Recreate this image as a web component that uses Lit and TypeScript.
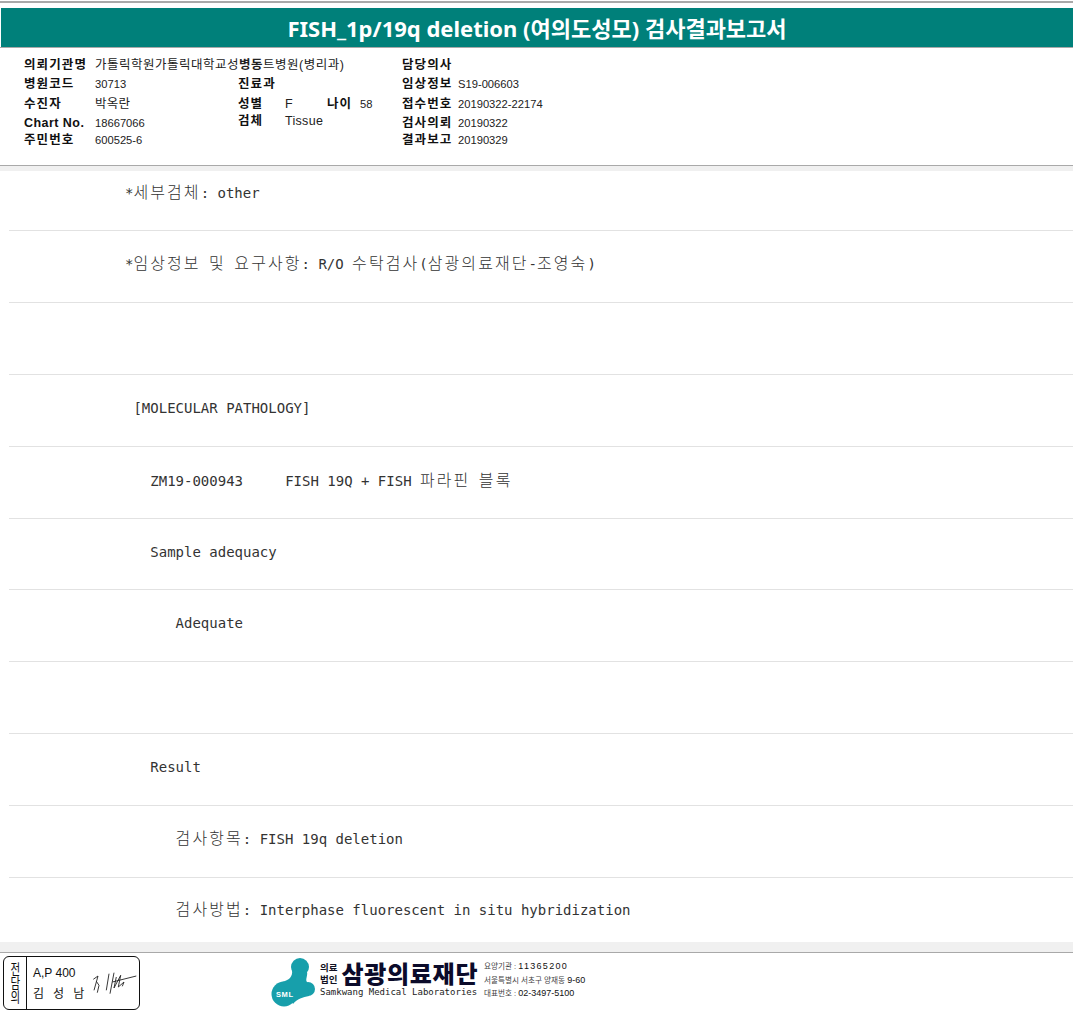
import { LitElement, html, css } from "lit";
import { customElement } from "lit/decorators.js";

const rows: { text: string; h: number; top: number }[] = [
  { text: "*세부검체: other", h: 60, top: 11 },
  { text: "*임상정보 및 요구사항: R/O 수탁검사(삼광의료재단-조영숙)", h: 72, top: 22 },
  { text: "", h: 72, top: 24 },
  { text: " [MOLECULAR PATHOLOGY]", h: 72, top: 24 },
  { text: "   ZM19-000943     FISH 19Q + FISH 파라핀 블록", h: 72, top: 23 },
  { text: "   Sample adequacy", h: 71, top: 24 },
  { text: "      Adequate", h: 72, top: 24 },
  { text: "", h: 72, top: 24 },
  { text: "   Result", h: 72, top: 24 },
  { text: "      검사항목: FISH 19q deletion", h: 72, top: 22 },
  { text: "      검사방법: Interphase fluorescent in situ hybridization", h: 64, top: 21 },
];

function mono(t: string) {
  return t.split(/([\uAC00-\uD7A3]+)/).map((p, i) =>
    i % 2 ? html`<span class="ko">${p}</span>` : p
  );
}

@customElement("app-root")
export class AppRoot extends LitElement {
  static styles = css`
    :host { display: block; width: 1073px; height: 1021px; background: #fff; overflow: hidden;
      font-family: "Liberation Sans", "Noto Sans CJK KR", sans-serif; color: #111; }
    .topline { height: 2px; margin-top: 1px; background: #a9a9a9; }
    .title { margin: 5px 0 0 1px; height: 39px; box-sizing: border-box; padding-top: 2px; background: #00807a; color: #fff; display: flex;
      align-items: center; justify-content: center; font: 700 22px/37px "Noto Sans", "Noto Sans CJK KR", sans-serif; }
    .titleline { height: 1px; background: #a9a9a9; }
    .info { height: 117px; box-sizing: border-box; padding: 8.5px 0 0 24px; display: grid;
      grid-template-columns: 71px 143px 47px 42px 33px 42px 56px auto;
      grid-template-rows: 18px 19px 21px 17px 17px; font-size: 12px; line-height: 17px; align-items: center; }
    .l { font-weight: 700; letter-spacing: 1.1px; white-space: nowrap; font-size: 12.5px; }
    .l.en { letter-spacing: 0.45px; }
    .v { white-space: nowrap; color: #222; font-size: 11.2px; }
    .v.t { font-size: 12.5px; letter-spacing: 0.3px; }
    .up { margin-bottom: 3px; }
    .wide { grid-column: 2 / span 3; font-size: 12.5px; letter-spacing: 0.5px; }
    .c3 { grid-column: 7; }
    .c8 { grid-column: 8; }
    .c1 { grid-column: 1; }
    .c2 { grid-column: 2; }
    .c3b { grid-column: 3; }
    .c4 { grid-column: 4; }
    .c5 { grid-column: 5; }
    .c6 { grid-column: 6; }
    .band { height: 5px; border-top: 1px solid #a9a9a9; background: #f0f0f0; }
    .row { margin-left: 9px; box-sizing: border-box; border-bottom: 1px solid #e2e2e2; padding-left: 116px;
      font: 14px/18px "DejaVu Sans Mono", monospace; white-space: pre; color: #333; }
    .row.last { border-bottom: 0; }
    .row > div { height: 18px; }
    .ko { font: 300 16px/18px "Noto Sans CJK KR", sans-serif; letter-spacing: 2.08px; }
    .foot { height: 10px; background: #f0f0f0; border-bottom: 1px solid #a9a9a9; }
    .bottom { display: flex; padding: 3px 0 0 3px; align-items: flex-start; }
    .stamp { width: 137px; height: 54px; box-sizing: border-box; border: 1px solid #111; border-radius: 6px; display: flex; flex: none; }
    .stamp .side { width: 22px; border-right: 1px solid #111; font-size: 14px; line-height: 14px; display: flex; flex-direction: column;
      align-items: center; justify-content: center; }
    .stamp .side span { transform: scaleX(0.75); }
    .stamp .who { font-size: 12px; padding: 6px 0 0 6px; line-height: 21px; width: 54px; white-space: pre; }
    .stamp .name { letter-spacing: 0.8px; }
    .stamp svg { margin-top: 9px; flex: none; }
    .logo { margin: 1px 0 0 131px; width: 46px; height: 50px; flex: none; }
    .brand { margin: 4px 0 0 3px; width: 160px; flex: none; }
    .brand .top { display: flex; align-items: center; gap: 4px; height: 26px; }
    .brand .small { font: 700 9.5px/12px "Noto Sans CJK KR", sans-serif; color: #112; white-space: nowrap; flex: none; }
    .brand .big { font: 900 24px/26px "Noto Sans CJK KR", sans-serif; color: #0b0b2a; letter-spacing: 0.7px; white-space: nowrap; }
    .brand .en { font: 9px/12px "DejaVu Sans Mono", monospace; color: #222; white-space: nowrap; letter-spacing: 0; }
    .contact { margin: 4px 0 0 4px; font-size: 7.6px; line-height: 13.5px; color: #444; white-space: nowrap; }
    .contact b { font-weight: 400; font-size: 9px; color: #111; }
    .sp { letter-spacing: 1.3px; }
  `;

  render() {
    return html`
      <div class="topline"></div>
      <div class="title">FISH_1p/19q deletion (여의도성모) 검사결과보고서</div>
      <div class="titleline"></div>
      <div class="info">
        <div class="l c1">의뢰기관명</div><div class="v wide">가톨릭학원가톨릭대학교성<b>병동</b>트병원(병리과)</div>
        <div class="l c3">담당의사</div>

        <div class="l c1">병원코드</div><div class="v c2">30713</div>
        <div class="l c3b">진료과</div>
        <div class="l c3">임상정보</div><div class="v c8">S19-006603</div>

        <div class="l c1">수진자</div><div class="v t c2">박옥란</div>
        <div class="l c3b">성별</div><div class="v t c4">F</div>
        <div class="l c5">나이</div><div class="v c6">58</div>
        <div class="l c3">접수번호</div><div class="v c8">20190322-22174</div>

        <div class="l en c1">Chart No.</div><div class="v c2">18667066</div>
        <div class="l c3b up">검체</div><div class="v t c4 up">Tissue</div>
        <div class="l c3">검사의뢰</div><div class="v c8">20190322</div>

        <div class="l c1">주민번호</div><div class="v c2">600525-6</div>
        <div class="l c3">결과보고</div><div class="v c8">20190329</div>
      </div>
      <div class="band"></div>
      ${rows.map(
        (r, i) => html`<div class="row ${i === rows.length - 1 ? "last" : ""}" style="height:${r.h}px;padding-top:${r.top}px"><div>${mono(r.text)}</div></div>`
      )}
      <div class="foot"></div>
      <div class="bottom">
        <div class="stamp">
          <div class="side"><span>전</span><span>담</span><span>의</span></div>
          <div class="who">A,P 400<br /><span class="name">김  성  남</span></div>
          <svg width="52" height="34" viewBox="0 0 52 34">
            <path d="M6.300 13.300 L11 10 L7 24.300 M9.300 15.300 L12 19.300 L10.300 26.700 M22 7.700 L19.300 24.300 M27 6.700 L23 27.700 M25.300 16 L49.300 10 M29.300 11 L27 22 L33.700 9.300 L31.300 21 L37 16 L35.300 20.300"
              fill="none" stroke="#222" stroke-width="0.9" />
          </svg>
        </div>
        <svg class="logo" viewBox="0 0 46 50">
          <g fill="#179fab">
            <circle cx="29" cy="10" r="9" />
            <circle cx="13" cy="37" r="12.500" />
            <circle cx="37" cy="32" r="7" />
            <path d="M21 13 C22 20 18 23 11 25 L22 47 C26 42 32 40 38 39 L36 25 C34 23 37 18 36 15 Z" />
          </g>
          <text x="5" y="40" font-size="7.500" font-weight="700" fill="#fff" font-family="Liberation Sans" letter-spacing="0.6">SML</text>
        </svg>
        <div class="brand">
          <div class="top">
            <div class="small">의료<br />법인</div>
            <div class="big">삼광의료재단</div>
          </div>
          <div class="en">Samkwang Medical Laboratories</div>
        </div>
        <div class="contact">
          요양기관 : <b class="sp">11365200</b><br />
          서울특별시 서초구 양재동 <b>9-60</b><br />
          대표번호 : <b>02-3497-5100</b>
        </div>
      </div>
    `;
  }
}
